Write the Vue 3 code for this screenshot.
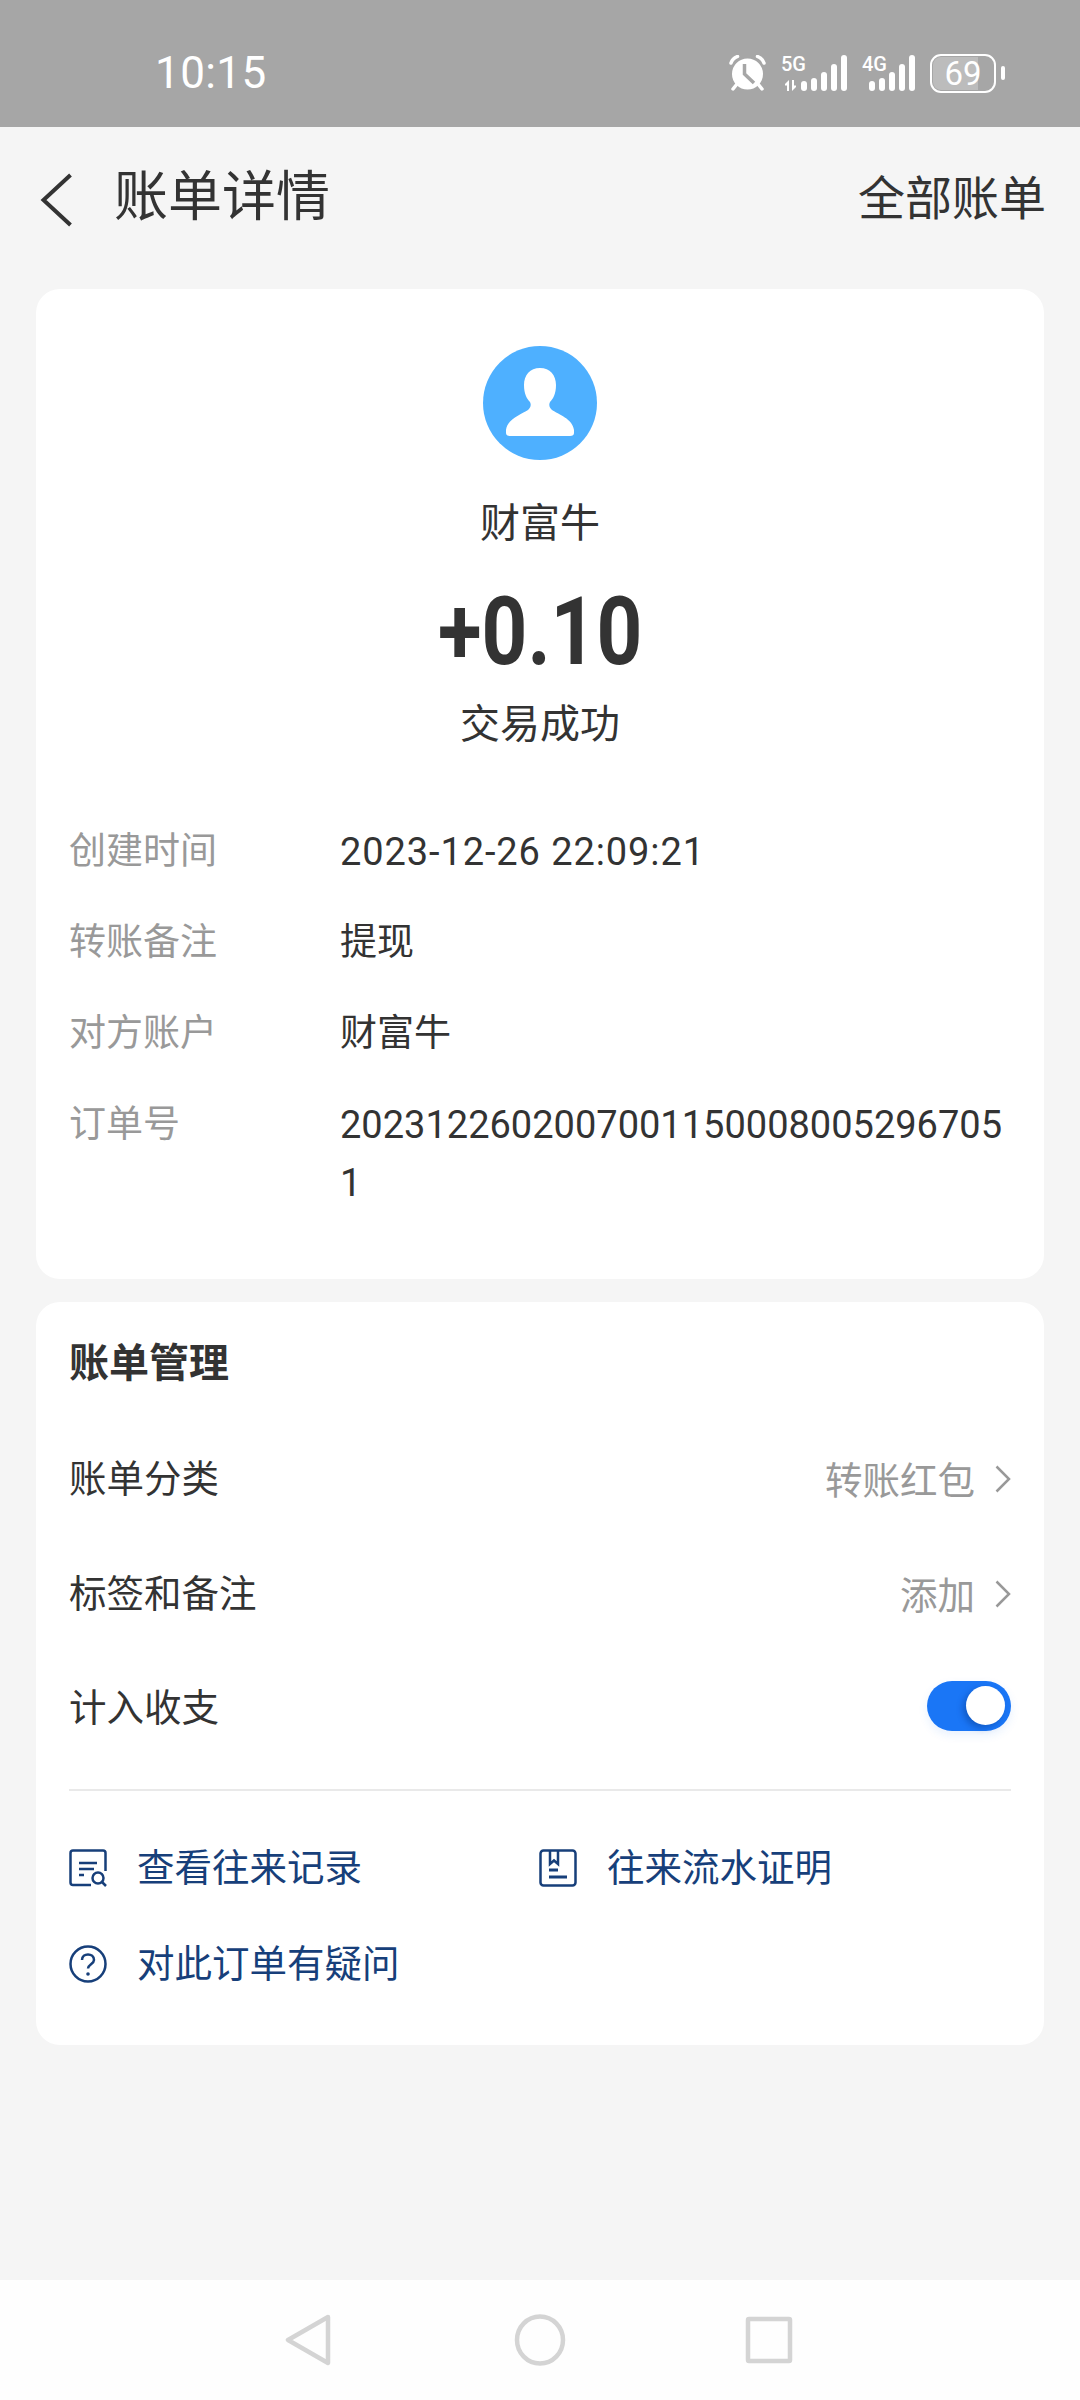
<script setup>
const details = [
  { label: '创建时间', value: '2023-12-26 22:09:21', cls: 'd-date' },
  { label: '转账备注', value: '提现' },
  { label: '对方账户', value: '财富牛' },
  { label: '订单号', value: '20231226020070011500080052967051', cls: 'd-num' },
]
const bars = [10, 13, 19, 27, 36]
</script>

<template>
  <div class="page">
    <!-- status bar -->
    <div class="status">
      <span class="time">10:15</span>
      <div class="status-icons">
        <svg class="alarm" width="37" height="36" viewBox="0 0 37 36">
          <path d="M2 8 Q3.500 3.500 8.500 1.500 M35 8 Q33.500 3.500 28.500 1.500" stroke="#fff" stroke-width="3.500" stroke-linecap="round" fill="none" />
          <path d="M8 29 L4 34 M29 29 L33 34" stroke="#fff" stroke-width="3.500" stroke-linecap="round" />
          <circle cx="18.500" cy="19" r="15.500" fill="#fff" />
          <path d="M15.500 9 V19 L25 28" stroke="#a6a6a6" stroke-width="3.500" fill="none" />
        </svg>
        <div class="signal">
          <div class="net">
            <span class="net-name">5G</span>
            <svg class="net-arrows" width="13" height="11" viewBox="0 0 13 11">
              <path d="M5 11 V0 L1 4 V5.500 H3 V11 Z M8 0 V11 L12 7 V5.500 H10 V0 Z" fill="#fff" />
            </svg>
          </div>
          <div class="bars">
            <i v-for="h in bars" :key="h" :style="{ height: h + 'px' }"></i>
          </div>
        </div>
        <div class="signal">
          <div class="net net-four">
            <span class="net-name">4G</span>
          </div>
          <div class="bars">
            <i v-for="h in bars" :key="h" :style="{ height: h + 'px' }"></i>
          </div>
        </div>
        <div class="battery">
          <div class="battery-body">
            <div class="battery-fill"></div>
            <span class="battery-num">69</span>
          </div>
          <div class="battery-tip"></div>
        </div>
      </div>
    </div>

    <!-- nav -->
    <div class="nav">
      <div class="nav-left">
        <svg width="34" height="54" viewBox="0 0 34 54">
          <path d="M30.500 2 L3.500 27 L30.500 52" fill="none" stroke="#333" stroke-width="4" />
        </svg>
        <span class="nav-title">账单详情</span>
      </div>
      <span class="nav-action">全部账单</span>
    </div>

    <main class="content">
      <!-- bill summary -->
      <section class="card summary">
        <div class="head">
          <svg class="avatar" width="114" height="114" viewBox="0 0 114 114">
            <circle cx="57" cy="57" r="57" fill="#4eb0ff" />
            <path d="M57 22 C47 22 41 29 41 39 C41 48 44 53 47 56 C48.500 59 47.500 62 45 64 C39 68 24 73 23 84 L23 87 Q23 90 27 90 L87 90 Q91 90 91 87 L91 84 C90 73 75 68 69 64 C66.500 62 65.500 59 67 56 C70 53 73 48 73 39 C73 29 67 22 57 22 Z" fill="#fff" />
          </svg>
          <div class="name">财富牛</div>
          <div class="amount">+0.10</div>
          <div class="state">交易成功</div>
        </div>
        <div class="details">
          <template v-for="d in details" :key="d.label">
            <div class="d-label">{{ d.label }}</div>
            <div class="d-value" :class="d.cls">{{ d.value }}</div>
          </template>
        </div>
      </section>

      <!-- bill management -->
      <section class="card manage">
        <div class="manage-title">账单管理</div>
        <div class="row">
          <span>账单分类</span>
          <span class="row-right">转账红包
            <svg class="chev" width="16" height="28" viewBox="0 0 16 28"><path d="M1.500 1.500 L14 14 L1.500 26.500" fill="none" stroke="#999" stroke-width="2.500" /></svg>
          </span>
        </div>
        <div class="row">
          <span>标签和备注</span>
          <span class="row-right">添加
            <svg class="chev" width="16" height="28" viewBox="0 0 16 28"><path d="M1.500 1.500 L14 14 L1.500 26.500" fill="none" stroke="#999" stroke-width="2.500" /></svg>
          </span>
        </div>
        <div class="row row-switch">
          <span>计入收支</span>
          <div class="switch"><div class="knob"></div></div>
        </div>
        <div class="divider"></div>
        <div class="links">
          <div class="link">
            <svg width="38" height="38" viewBox="0 0 38 38" fill="none" stroke="#173f7a" stroke-width="2.500">
              <path d="M22 36 H4 Q1.500 36 1.500 33.500 V4 Q1.500 1.500 4 1.500 H34 Q36.500 1.500 36.500 4 V22" />
              <path d="M10 14 H28 M10 20 H25 M10 26 H15" />
              <circle cx="29" cy="29" r="5.500" />
              <path d="M33 33 L37 37" />
            </svg>
            <span>查看往来记录</span>
          </div>
          <div class="link">
            <svg width="38" height="38" viewBox="0 0 38 38" fill="none" stroke="#173f7a" stroke-width="2.500">
              <rect x="1.500" y="1.500" width="35" height="35" rx="3" />
              <path d="M11 2 V15 L15 11.500 L19 15 V2" />
              <path d="M10 21 H19 M10 28 H28" stroke-width="3" />
            </svg>
            <span>往来流水证明</span>
          </div>
          <div class="link link-full">
            <svg width="38" height="38" viewBox="0 0 38 38" fill="none" stroke="#173f7a" stroke-width="2.500">
              <circle cx="19" cy="19" r="17.500" />
              <path d="M13 15 C13 7.500 25 7.500 25 15 C25 19 19 19.500 19 23.500" />
              <circle cx="19" cy="29" r="1.800" fill="#173f7a" stroke="none" />
            </svg>
            <span>对此订单有疑问</span>
          </div>
        </div>
      </section>
    </main>

    <!-- system nav -->
    <div class="sysnav">
      <svg width="46" height="52" viewBox="0 0 46 52" fill="none" stroke="#d4d4d4" stroke-width="4.500" stroke-linejoin="round">
        <path d="M43 3 L3 26 L43 49 Z" />
      </svg>
      <svg class="sys-home" width="52" height="52" viewBox="0 0 52 52" fill="none" stroke="#d4d4d4" stroke-width="4.500">
        <ellipse cx="26" cy="26" rx="23" ry="23.500" />
      </svg>
      <svg class="sys-recent" width="48" height="48" viewBox="0 0 48 48" fill="none" stroke="#d4d4d4" stroke-width="4.500" stroke-linejoin="round">
        <rect x="3" y="3" width="42" height="42" rx="1" />
      </svg>
    </div>
  </div>
</template>

<style>
html, body { margin: 0; background: #f5f5f5; }
</style>

<style scoped>
.page {
  width: 1080px;
  height: 2400px;
  display: flex;
  flex-direction: column;
  background: #f5f5f5;
  color: #333;
  font-family: Roboto, "Noto Sans CJK SC", sans-serif;
  overflow: hidden;
}

/* ── Status bar ── */
.status {
  height: 127px;
  flex: none;
  background: #a6a6a6;
  color: #fff;
  display: flex;
  align-items: center;
  justify-content: space-between;
  padding: 19px 75px 0 155px;
  box-sizing: border-box;
}
.time { font-size: 44px; font-weight: 400; letter-spacing: 0.4px; }
.status-icons { display: flex; align-items: center; }
.alarm { margin-right: 15px; }
.signal { display: flex; align-items: flex-end; height: 36px; margin-right: 15px; }
.net {
  display: flex;
  flex-direction: column;
  justify-content: space-between;
  align-self: stretch;
  width: 20px;
  white-space: nowrap;
}
.net-four { width: 7px; }
.net-name { font-size: 20px; line-height: 18px; font-weight: 500; }
.net-arrows { display: block; margin-left: 3px; }
.bars { display: flex; align-items: flex-end; gap: 4px; }
.bars i { display: block; width: 6px; background: #fff; border-radius: 3px; }
.battery { display: flex; align-items: center; }
.battery-body {
  position: relative;
  width: 66px;
  height: 39px;
  border: 2.500px solid #fff;
  border-radius: 11px;
  box-sizing: border-box;
  display: flex;
  align-items: center;
  justify-content: center;
  overflow: hidden;
}
.battery-fill {
  position: absolute;
  left: 1px;
  top: 1px;
  bottom: 1px;
  width: 72%;
  background: #bcbcbc;
  border-radius: 8px 0 0 8px;
}
.battery-num { position: relative; font-size: 33px; line-height: 1; }
.battery-tip { width: 4px; height: 14px; background: #fff; border-radius: 2px; margin-left: 5px; }

/* ── Nav ── */
.nav {
  height: 162px;
  flex: none;
  display: flex;
  align-items: center;
  justify-content: space-between;
  padding: 0 34px 16px 40px;
  box-sizing: border-box;
}
.nav-left { display: flex; align-items: center; gap: 40px; }
.nav-title { font-size: 54px; line-height: 74px; color: #333; margin-top: -4px; }
.nav-action { font-size: 47px; line-height: 70px; color: #333; margin-top: -2px; }

/* ── Cards ── */
.content {
  flex: 1;
  padding: 0 36px;
  display: flex;
  flex-direction: column;
  gap: 23px;
}
.card {
  background: #fff;
  border-radius: 24px;
  box-sizing: border-box;
}
.summary { height: 990px; padding: 57px 33px 0; }
.head { display: flex; flex-direction: column; align-items: center; }
.avatar { display: block; }
.name { font-size: 40px; line-height: 56px; margin-top: 36px; }
.amount {
  font-size: 94px;
  line-height: 100px;
  font-weight: 700;
  margin-top: 30px;
  transform: scaleX(0.85);
}
.state { font-size: 40px; line-height: 56px; margin-top: 15px; }

.details {
  display: grid;
  grid-template-columns: 271px 1fr;
  row-gap: 33px;
  margin-top: 70px;
}
.d-label { font-size: 37px; line-height: 58px; color: #999; }
.d-value { font-size: 37px; line-height: 58px; color: #333; }
.d-num { font-size: 38px; word-break: break-all; }
.d-date { font-size: 38px; letter-spacing: 0.9px; }

.manage { height: 743px; padding: 34px 33px 0; }
.manage-title { font-size: 40px; line-height: 56px; font-weight: 700; margin-bottom: 26px; }
.row {
  height: 115px;
  display: flex;
  align-items: center;
  justify-content: space-between;
  font-size: 37.500px;
}
.row-switch span { margin-top: -3px; }
.row-right {
  display: flex;
  align-items: center;
  gap: 20px;
  color: #999;
  margin-top: 3px;
}
.chev { margin-top: 3px; }
.switch {
  width: 84px;
  height: 50px;
  background: #1a76f6;
  border-radius: 25px;
  position: relative;
  box-shadow: 0 4px 10px rgba(26, 118, 246, 0.1);
}
.knob {
  position: absolute;
  top: 5.500px;
  right: 6px;
  width: 39px;
  height: 39px;
  border-radius: 50%;
  background: #fff;
  box-shadow: -3px 3px 6px rgba(0, 40, 110, 0.35);
}
.divider { height: 1.500px; background: #e9e9e9; margin-top: 26px; }
.links {
  display: grid;
  grid-template-columns: 470px 1fr;
  row-gap: 50px;
  margin-top: 54px;
  color: #173f7a;
}
.link { display: flex; align-items: center; gap: 30px; font-size: 37.500px; line-height: 46px; }
.link-full { grid-column: 1 / -1; }

/* ── System nav ── */
.sysnav {
  height: 120px;
  flex: none;
  background: #fefefe;
  display: flex;
  align-items: center;
  padding-left: 285px;
  box-sizing: border-box;
}
.sys-home { margin-left: 183px; }
.sys-recent { margin-left: 179px; }
</style>
